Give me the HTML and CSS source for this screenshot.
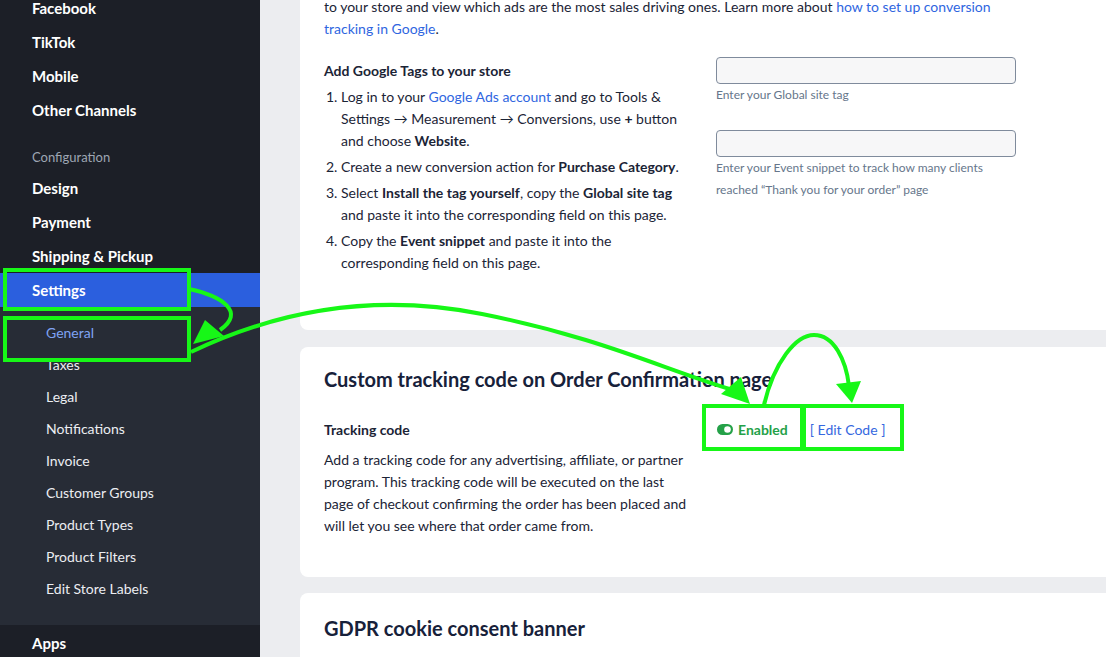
FILE: index.html
```html
<!DOCTYPE html>
<html lang="en">
<head>
    <meta charset="UTF-8">
    <title>Settings — General</title>
    <link rel="stylesheet" href="styles.css">
</head>
<body>
<div class="layout">
    <aside class="sidebar">
        <ul class="nav">
            <li class="nav-item">Facebook</li>
            <li class="nav-item">TikTok</li>
            <li class="nav-item">Mobile</li>
            <li class="nav-item">Other Channels</li>
            <li class="nav-label">Configuration</li>
            <li class="nav-item">Design</li>
            <li class="nav-item">Payment</li>
            <li class="nav-item">Shipping &amp; Pickup</li>
            <li class="nav-item active">Settings</li>
        </ul>
        <ul class="subnav">
            <li class="current">General</li>
            <li>Taxes</li>
            <li>Legal</li>
            <li>Notifications</li>
            <li>Invoice</li>
            <li>Customer Groups</li>
            <li>Product Types</li>
            <li>Product Filters</li>
            <li>Edit Store Labels</li>
        </ul>
        <ul class="nav nav-bottom">
            <li class="nav-item">Apps</li>
        </ul>
    </aside>

    <main class="main">
        <section class="card card-first">
            <p class="intro">to your store and view which ads are the most sales driving ones. Learn more about <a href="#">how to set up conversion tracking in Google</a>.</p>
            <div class="row row-tags">
                <div class="col-left">
                    <h4 class="label">Add Google Tags to your store</h4>
                    <ol class="steps">
                        <li>Log in to your <a href="#">Google Ads account</a> and go to Tools &amp; Settings &rarr; Measurement &rarr; Conversions, use <b>+</b> button and choose <b>Website</b>.</li>
                        <li>Create a new conversion action for <b>Purchase Category</b>.</li>
                        <li>Select <b>Install the tag yourself</b>, copy the <b>Global site tag</b> and paste it into the corresponding field on this page.</li>
                        <li>Copy the <b>Event snippet</b> and paste it into the corresponding field on this page.</li>
                    </ol>
                </div>
                <div class="col-right">
                    <input class="field" type="text">
                    <div class="hint">Enter your Global site tag</div>
                    <input class="field field-gap" type="text">
                    <div class="hint">Enter your Event snippet to track how many clients reached “Thank you for your order” page</div>
                </div>
            </div>
        </section>

        <section class="card card-tracking">
            <h2 class="card-title">Custom tracking code on Order Confirmation page</h2>
            <div class="row row-code">
                <div class="col-left">
                    <h4 class="label">Tracking code</h4>
                    <p class="desc">Add a tracking code for any advertising, affiliate, or partner program. This tracking code will be executed on the last page of checkout confirming the order has been placed and will let you see where that order came from.</p>
                </div>
                <div class="col-right status">
                    <span class="enabled">
                        <svg class="toggle" width="16" height="11" viewBox="0 0 16 11">
                            <rect x="0" y="0" width="16" height="11" rx="5.5" fill="#24a148"/>
                            <circle cx="10.5" cy="5.5" r="3.3" fill="#fff"/>
                        </svg>
                        Enabled
                    </span>
                    <a href="#" class="edit">[ Edit Code ]</a>
                </div>
            </div>
        </section>

        <section class="card card-gdpr">
            <h2 class="card-title">GDPR cookie consent banner</h2>
        </section>
    </main>
</div>

<!-- hand-drawn markers on top of the page -->
<svg class="marks" width="1106" height="657" viewBox="0 0 1106 657">
    <g fill="none" stroke="#17f717" stroke-width="4">
        <rect x="5" y="270" width="184" height="39"/>
        <rect x="5" y="318" width="184" height="42"/>
        <rect x="704" y="406" width="98" height="43"/>
        <rect x="804" y="406" width="98" height="43"/>
        <path d="M189 289 C222 296 246 312 220 330"/>
        <path d="M191 352 C262 318 362 290 482 314 S660 368 733 390"/>
        <path d="M764 405 C774 362 796 335 814 335 C834 335 846 360 849 386"/>
    </g>
    <g fill="#17f717">
        <polygon points="193,344 205,320 224,336"/>
        <polygon points="750,404 721,394 741,377"/>
        <polygon points="852,403 836,384 861,381"/>
    </g>
</svg>
</body>
</html>
```

FILE: styles.css
```css
* {
    padding: 0;
    margin: 0;
    box-sizing: border-box;
}

body {
    position: relative;
    width: 1106px;
    height: 657px;
    overflow: hidden;
    font-family: Lato, "Open Sans", sans-serif;
    font-size: 14px;
    color: #1b2436;
    background: #ecedf0;
}

a {
    color: #2f66df;
    text-decoration: none;
}

ul, ol {
    list-style: none;
}

.layout {
    display: flex;
    height: 657px;
}

/* sidebar */
.sidebar {
    width: 260px;
    flex-shrink: 0;
    display: flex;
    flex-direction: column;
    background: #1c1f27;
    color: #fff;
}

.nav {
    margin-top: -9px;
}

.nav-item {
    height: 34px;
    line-height: 34px;
    padding-left: 32px;
    font-size: 15px;
    font-weight: 700;
}

.nav-item.active {
    background: #2b5fde;
}

.nav-label {
    margin-top: 20px;
    height: 24px;
    line-height: 20px;
    padding-left: 32px;
    font-size: 13px;
    color: #9ea6b3;
}

.subnav {
    background: #272c36;
    padding: 10px 0 20px;
}

.subnav li {
    height: 32px;
    line-height: 32px;
    padding-left: 46px;
    font-size: 14px;
    color: #eceef2;
}

.subnav li.current {
    color: #7fa3f3;
}

.nav-bottom {
    margin-top: 0;
    padding-top: 1px;
}

/* content */
.main {
    flex: 1;
    padding-left: 40px;
    overflow: hidden;
}

.card {
    width: 840px;
    background: #fff;
    border-radius: 8px;
    padding: 24px 24px 0;
}

.card-first {
    margin-top: -28px;
    padding-bottom: 52px;
}

.card-tracking {
    margin-top: 17px;
    padding-top: 20px;
    padding-bottom: 40px;
}

.card-gdpr {
    margin-top: 16px;
    padding-top: 23px;
    height: 120px;
}

.intro {
    width: 690px;
    line-height: 22px;
}

.row {
    display: flex;
    gap: 16px;
}

.row-tags {
    margin-top: 17px;
}

.col-left {
    width: 366px;
    flex-shrink: 0;
    margin-right: 10px;
}

.col-right {
    width: 300px;
}

.label {
    font-size: 14px;
    font-weight: 700;
    line-height: 22px;
}

.row-tags .label {
    margin-top: 3px;
}

.steps {
    list-style: decimal;
    padding-left: 17px;
    margin-top: 4px;
    line-height: 22px;
}

.steps li {
    margin-bottom: 4px;
}

.steps li::marker {
    color: #1b2436;
}

.steps b {
    font-weight: 700;
}

.field {
    display: block;
    width: 300px;
    height: 27px;
    border: 1px solid #7f8b9c;
    border-radius: 4px;
    background: #f7f7f8;
}

.field-gap {
    margin-top: 24px;
}

.hint {
    font-size: 12px;
    line-height: 22px;
    color: #66768b;
}

.card-title {
    font-size: 20px;
    font-weight: 700;
    line-height: 24px;
    color: #17213a;
}

.row-code {
    margin-top: 28px;
}

.desc {
    margin-top: 8px;
    line-height: 22px;
}

.status {
    display: flex;
    align-items: center;
    gap: 22px;
    height: 20px;
    padding-left: 1px;
}

.enabled {
    display: flex;
    align-items: center;
    gap: 5px;
    font-weight: 700;
    color: #24a148;
}

.edit {
    color: #3568e0;
}

.marks {
    position: absolute;
    top: 0;
    left: 0;
    pointer-events: none;
}
```
